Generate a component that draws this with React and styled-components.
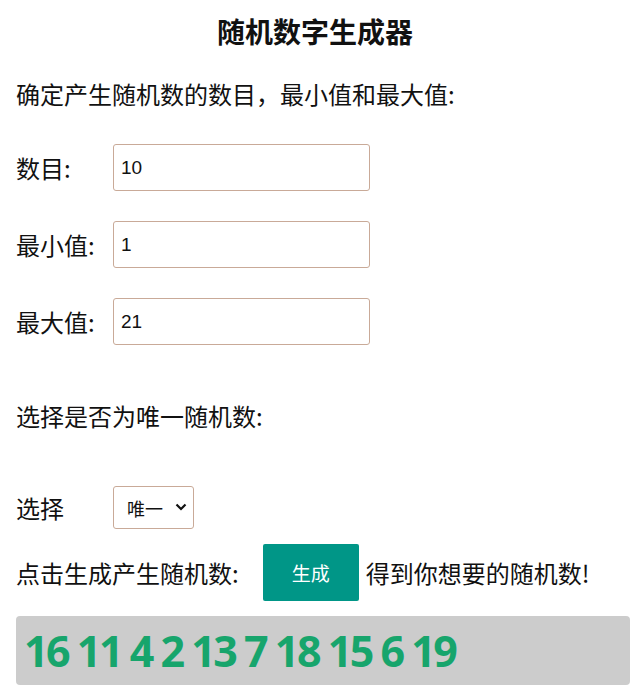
import React from 'react';
import styled, { createGlobalStyle } from 'styled-components';

const GlobalStyle = createGlobalStyle`
  body {
    margin: 0;
    background: #fff;
    font-family: "Noto Sans CJK SC", "Noto Sans", sans-serif;
    color: #111;
  }
`;

const Page = styled.div`
  display: flex;
  flex-flow: column;
  padding: 0 1px 0 16px;
`;

const Title = styled.h1`
  margin: 12px 0 0 -16px;
  text-align: center;
  font-size: 28px;
  line-height: 38px;
  font-weight: 700;
`;

const Text = styled.p`
  margin: ${p => p.$margin || '0'};
  font-size: 24px;
  line-height: 32px;
`;

const Row = styled.div`
  display: flex;
  align-items: center;
  margin-top: ${p => p.$top || 0}px;
`;

const Label = styled.span`
  width: ${p => p.$auto ? 'auto' : '97px'};
  font-size: 24px;
  line-height: 32px;
`;

const Input = styled.input`
  box-sizing: border-box;
  width: 257px;
  height: 47px;
  padding: 0 7px;
  border: 1px solid #c9aa98;
  border-radius: 3px;
  font-family: "Liberation Sans", Arial, sans-serif;
  font-size: 19px;
  color: #111;
  outline: none;
`;

const SelectBox = styled.div`
  position: relative;
  width: 81px;
  height: 43px;
`;

const Select = styled.select`
  appearance: none;
  box-sizing: border-box;
  width: 100%;
  height: 100%;
  padding: 0 0 0 13px;
  border: 1px solid #c9aa98;
  border-radius: 3px;
  background: #fff;
  font-family: "Noto Sans CJK SC", sans-serif;
  font-size: 18px;
  color: #111;
  outline: none;
`;

const Chevron = styled.svg`
  position: absolute;
  right: 7px;
  top: 17px;
  pointer-events: none;
`;

const Button = styled.button`
  width: 96px;
  height: 57px;
  margin: 0 7px 0 24px;
  border: none;
  border-radius: 2px;
  background: #009687;
  color: #fff;
  font-family: "Noto Sans CJK SC", sans-serif;
  font-size: 19px;
`;

const Result = styled.div`
  margin-top: 15px;
  height: 69px;
  display: flex;
  align-items: center;
  padding-left: 8px;
  background: #cccccc;
  border-radius: 4px;
  color: #17a56c;
  font-family: "Open Sans", sans-serif;
  font-weight: 700;
  font-size: 43px;
  letter-spacing: -2.5px;
  white-space: pre;
`;

const numbers = [16, 11, 4, 2, 13, 7, 18, 15, 6, 19];

export default function App() {
  return (
    <Page>
      <GlobalStyle />
      <Title>随机数字生成器</Title>
      <Text $margin="28px 0 0">确定产生随机数的数目，最小值和最大值:</Text>
      <Row $top={34}>
        <Label>数目:</Label>
        <Input defaultValue="10" />
      </Row>
      <Row $top={30}>
        <Label>最小值:</Label>
        <Input defaultValue="1" />
      </Row>
      <Row $top={30}>
        <Label>最大值:</Label>
        <Input defaultValue="21" />
      </Row>
      <Text $margin="55px 0 0">选择是否为唯一随机数:</Text>
      <Row $top={54}>
        <Label>选择</Label>
        <SelectBox>
          <Select defaultValue="unique">
            <option value="unique">唯一</option>
            <option value="repeat">可重复</option>
          </Select>
          <Chevron width="12" height="8" viewBox="0 0 12 8">
            <path d="M1.5 1.5 L6 6 L10.5 1.5" fill="none" stroke="#111" strokeWidth="2.2" />
          </Chevron>
        </SelectBox>
      </Row>
      <Row $top={15}>
        <Label $auto>点击生成产生随机数:</Label>
        <Button>生成</Button>
        <Text>得到你想要的随机数!</Text>
      </Row>
      <Result>{numbers.join(' ')}</Result>
    </Page>
  );
}
